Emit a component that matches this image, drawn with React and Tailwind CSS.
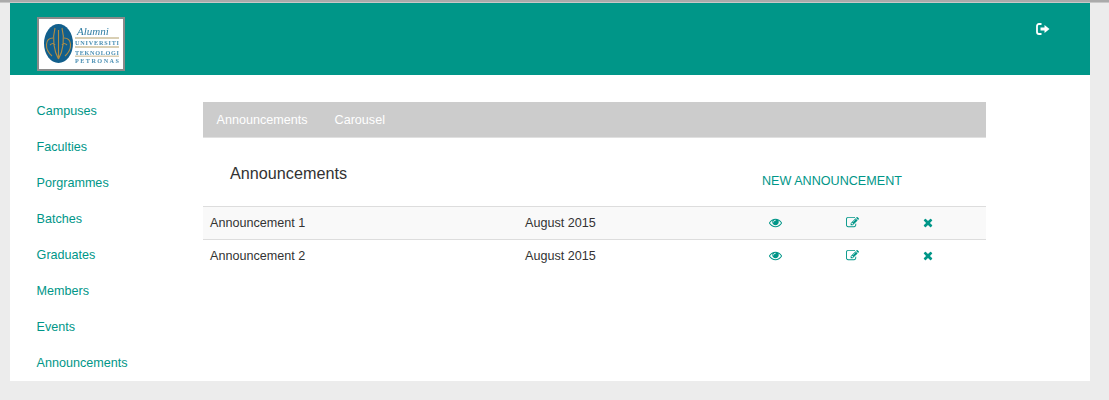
import React from 'react';

const sideLinks = ['Campuses', 'Faculties', 'Porgrammes', 'Batches', 'Graduates', 'Members', 'Events', 'Announcements'];
const rows = [
  { title: 'Announcement 1', date: 'August 2015', bg: 'bg-[#f9f9f9]' },
  { title: 'Announcement 2', date: 'August 2015', bg: 'bg-white' },
];

function Logo() {
  const serif = "'Liberation Serif', serif";
  return (
    <div className="w-[88px] h-[54px] bg-white border-2 border-[#8a8a8a]">
      <svg width="84" height="50" viewBox="0 0 84 50" className="blur-[0.3px]">
        <ellipse cx="19.5" cy="24.5" rx="14.5" ry="19.5" fill="#125f8c" />
        <path d="M19.5 40 V11 M19.5 40 C15 32 13 20 16 9 M19.5 40 C24 32 26 20 23 9 M13 37 C5 30 6 19 14 19 M26 37 C34 30 33 19 25 19 M11 26 C13 24 15 24 16 26 M28 26 C26 24 24 24 23 26" fill="none" stroke="#b08d45" strokeWidth="1.1" />
        <text x="38" y="16" fontFamily={serif} fontStyle="italic" fontSize="11" fill="#2f7da3">Alumni</text>
        <rect x="36" y="18" width="44" height="2" fill="#d9cfb4" />
        <text transform="translate(36 26) scale(1 1.15)" fontFamily={serif} fontWeight="700" fontSize="6.2" textLength="44" fill="#4a8fb3">UNIVERSITI</text>
        <rect x="36" y="27" width="44" height="2" fill="#d9cfb4" />
        <text transform="translate(36 35.5) scale(1 1.15)" fontFamily={serif} fontWeight="700" fontSize="6.2" textLength="44" fill="#4a8fb3">TEKNOLOGI</text>
        <rect x="36" y="36.5" width="44" height="1.5" fill="#d9cfb4" />
        <text transform="translate(36 44) scale(1 1.15)" fontFamily={serif} fontWeight="700" fontSize="6.2" textLength="44" fill="#4a8fb3">PETRONAS</text>
      </svg>
    </div>
  );
}

function SignOutIcon() {
  return (
    <svg width="14" height="12" viewBox="0 0 14 12" fill="none">
      <path d="M5.5 1 H3 C1.7 1 1 1.8 1 3 V9 C1 10.2 1.7 11 3 11 H5.5" stroke="#fff" strokeWidth="1.8" />
      <path d="M4.5 4.5 H8.5 V2 L13.5 6 L8.5 10 V7.5 H4.5 Z" fill="#fff" />
    </svg>
  );
}

function EyeIcon() {
  return (
    <svg width="13" height="13" viewBox="0 0 1792 1792" fill="#009688">
      <path d="M1664 960q-152-236-381-353 61 104 61 225 0 185-131.5 316.5t-316.5 131.5-316.5-131.5-131.5-316.5q0-121 61-225-229 117-381 353 133 205 333.5 326.5t434.5 121.5 434.5-121.5 333.5-326.5zm-720-384q0-20-14-34t-34-14q-125 0-214.5 89.5t-89.5 214.5q0 20 14 34t34 14 34-14 14-34q0-86 61-147t147-61q20 0 34-14t14-34zm848 384q0 34-20 69-140 230-376.5 368.5t-499.5 138.5-499.5-139-376.5-368q-20-35-20-69t20-69q140-229 376.5-368t499.5-139 499.5 139 376.5 368q20 35 20 69z" />
    </svg>
  );
}

function EditIcon() {
  return (
    <svg width="13" height="13" viewBox="0 0 1792 1792" fill="#009688">
      <path d="M888 1184l116-116-152-152-116 116v56h96v96h56zm440-720q-16-16-33 1l-350 350q-17 17-1 33t33-1l350-350q17-17 1-33zm80 594v190q0 119-84.5 203.5t-203.5 84.5h-832q-119 0-203.5-84.5t-84.5-203.5v-832q0-119 84.5-203.5t203.5-84.5h832q63 0 117 25 15 7 18 23 3 17-9 29l-49 49q-14 14-32 8-23-6-45-6h-832q-66 0-113 47t-47 113v832q0 66 47 113t113 47h832q66 0 113-47t47-113v-126q0-13 9-22l64-64q15-15 35-9t20 29zm-96-738l288 288-672 672h-288v-288zm444 132l-92 92-288-288 92-92q28-28 68-28t68 28l152 152q28 28 28 68t-28 68z" />
    </svg>
  );
}

function TimesIcon() {
  return (
    <svg width="10" height="13" viewBox="0 0 1408 1792" fill="#009688">
      <path d="M1298 1322q0 40-28 68l-136 136q-28 28-68 28t-68-28l-294-294-294 294q-28 28-68 28t-68-28l-136-136q-28-28-28-68t28-68l294-294-294-294q-28-28-28-68t28-68l136-136q28-28 68-28t68 28l294 294 294-294q28-28 68-28t68 28l136 136q28 28 28 68t-28 68l-294 294 294 294q28 28 28 68z" />
    </svg>
  );
}

export default function App() {
  return (
    <div className="min-h-[400px] bg-[#ececec] font-['Liberation_Sans',Arial,sans-serif] text-[12.6px] text-[#333]">
      <div className="h-[3px] bg-[#aaaaaa] border-b border-[#c8c8c8]" />
      <div className="mx-[10px] w-[1080px] bg-white h-[378px] overflow-hidden">
        <header className="h-[72px] bg-[#009688] flex justify-between pl-[27px] pr-[40px] pt-[14px]">
          <Logo />
          <div className="pt-[6px]"><SignOutIcon /></div>
        </header>

        <div className="flex">
          <nav className="w-[193px] pl-[26.6px] pt-[18px] flex flex-col">
            {sideLinks.map(link => (
              <a key={link} className="h-[36px] leading-[36px] text-[#009688]">{link}</a>
            ))}
          </nav>

          <main className="w-[783px] pt-[27px]">
            <div className="h-[36px] bg-[#cccccc] border-b border-[#e0e0e0] flex items-center pl-[13.5px] pt-[2px] gap-[27px] text-white">
              <span>Announcements</span>
              <span>Carousel</span>
            </div>
            <div className="flex h-[68px]">
              <h1 className="w-[559px] pl-[27px] pt-[25px] text-[16.2px] leading-[20px]">Announcements</h1>
              <a className="pt-[36px] leading-[15px] text-[#009688]">NEW ANNOUNCEMENT</a>
            </div>
            {rows.map(row => (
              <div key={row.title} className={`h-[33px] border-t border-[#dddddd] flex items-center ${row.bg}`}>
                <span className="w-[322px] pl-[7px]">{row.title}</span>
                <span className="w-[244px]">{row.date}</span>
                <span className="w-[77px] flex pb-[2px]"><EyeIcon /></span>
                <span className="w-[77px] flex pb-[2px]"><EditIcon /></span>
                <span className="flex pb-[2px]"><TimesIcon /></span>
              </div>
            ))}
          </main>
        </div>
      </div>
    </div>
  );
}
